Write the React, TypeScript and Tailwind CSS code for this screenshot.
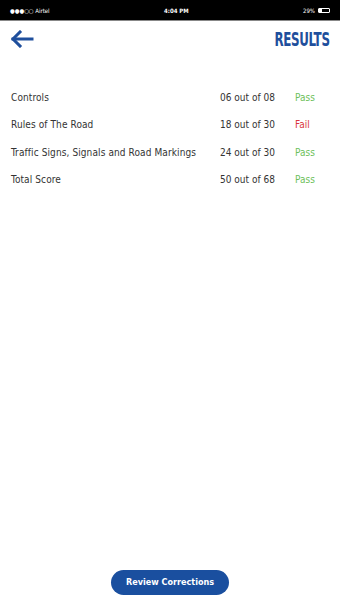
import React from "react";

const rows = [
  { name: "Controls", score: "06 out of 08", result: "Pass" },
  { name: "Rules of The Road", score: "18 out of 30", result: "Fail" },
  { name: "Traffic Signs, Signals and Road Markings", score: "24 out of 30", result: "Pass" },
  { name: "Total Score", score: "50 out of 68", result: "Pass" },
];

export default function App() {
  return (
    <div className="w-[340px] h-[606px] bg-white flex flex-col" style={{ fontFamily: "'DejaVu Sans Condensed', 'Liberation Sans', sans-serif" }}>
      <div className="h-[20px] bg-black flex items-center justify-between px-[10px] text-white text-[6px]">
        <span>●●●○○ Airtel</span>
        <span className="font-bold">4:04 PM</span>
        <span className="flex items-center gap-[2px]">29%<span className="inline-block w-[12px] h-[5px] border border-white rounded-[1px] ml-[1px]"><span className="block w-[3px] h-full bg-white" /></span></span>
      </div>
      <div className="h-[1px] bg-[#888]" />
      <div className="flex items-center justify-between pl-[10px] pr-[10px] pt-[3px]">
        <svg width="24" height="18" viewBox="0 0 24 18" fill="none" stroke="#1f4f9c" strokeWidth="3" strokeLinecap="square">
          <path d="M3 9H22" />
          <path d="M10 2L3 9L10 16" />
        </svg>
        <span className="text-[#1f4f9c] text-[20px] font-bold tracking-[-0.5px] scale-x-[0.66] origin-right" style={{ fontFamily: "'DejaVu Sans Condensed', 'Liberation Sans Narrow', sans-serif" }}>RESULTS</span>
      </div>
      <div className="flex flex-col gap-[13.5px] mt-[36px] px-[11px] text-[10px] text-[#333]">
        {rows.map((r) => (
          <div key={r.name} className="flex items-center h-[14px]">
            <span className="flex-1 tracking-[0.1px]">{r.name}</span>
            <span className="w-[75px]">{r.score}</span>
            <span className={"w-[34px] " + (r.result === "Pass" ? "text-[#6cbf5a]" : "text-[#d9363e]")}>{r.result}</span>
          </div>
        ))}
      </div>
      <div className="flex-1" />
      <div className="flex justify-center mb-[11px]">
        <button className="w-[118px] h-[25px] rounded-full bg-[#1a4f9f] text-white text-[9px] font-bold">Review Corrections</button>
      </div>
    </div>
  );
}
